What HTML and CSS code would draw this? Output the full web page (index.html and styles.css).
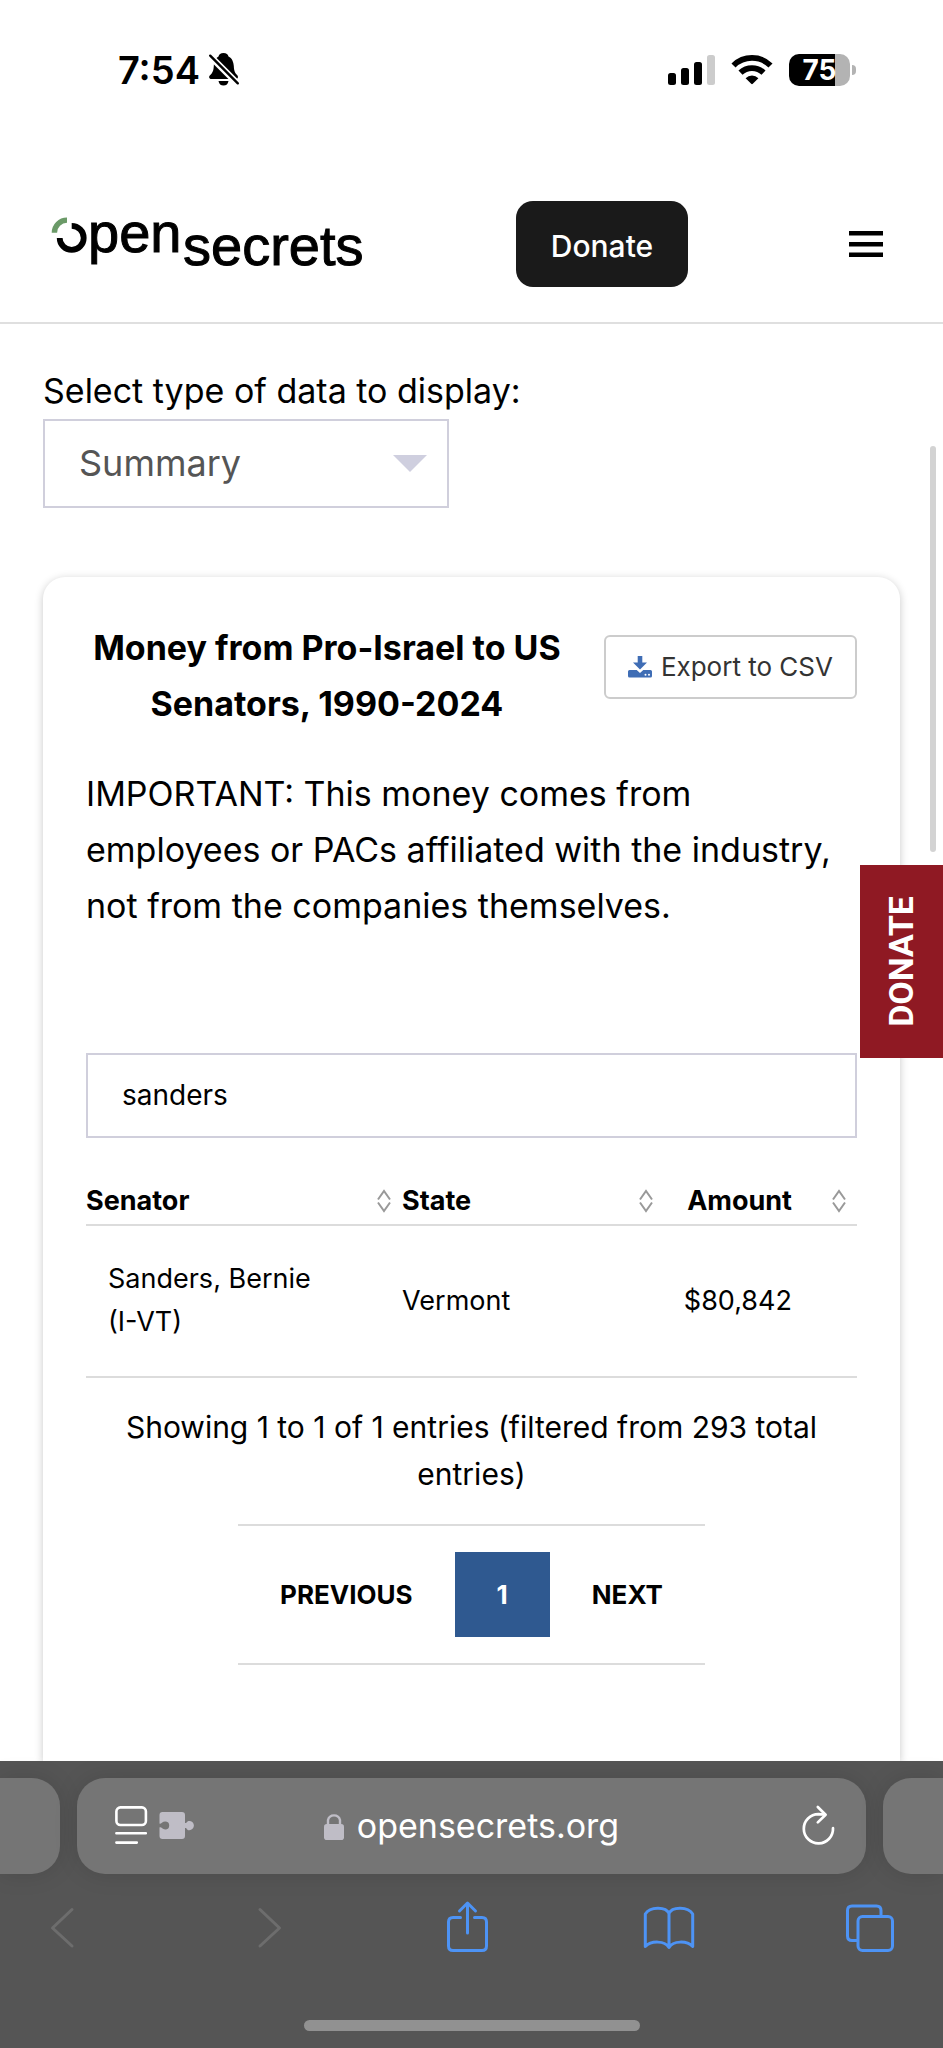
FILE: index.html
```html
<!DOCTYPE html>
<html lang="en">
<head>
<meta charset="utf-8">
<meta name="viewport" content="width=device-width, initial-scale=1">
<title>Money from Pro-Israel to US Senators - OpenSecrets</title>
<link rel="stylesheet" href="styles.css">
</head>
<body>
<div class="status-bar">
  <div class="status-left">
    <span class="clock">7:54</span>
    <svg class="bell" viewBox="0 0 30 34" width="30" height="34" aria-hidden="true">
      <path d="M14.500 0C17.500 0 19 1.500 19.500 3.500C23 5 24.500 9 24.800 13C25 18 26 20 28.500 22.500C29.600 24 28.800 26 27 26H2.500C.3 26 -.6 24 .8 22.500C4 19.500 4.500 17.500 4.800 13C5 9 6.500 5 9.500 3.500C10 1.500 11.500 0 14.500 0Z"/>
      <path d="M9.500 28H19.500C19 31 17.300 32.500 14.500 32.500S10 31 9.500 28Z"/>
      <path d="M-1 1L30 32" stroke="#fff" stroke-width="6.500"/>
      <path d="M1.200 2.700L28.800 30.300" stroke="#000" stroke-width="2.400" stroke-linecap="round"/>
    </svg>
  </div>
  <div class="status-right">
    <svg viewBox="0 0 47 30" width="47" height="30" aria-label="Signal">
      <rect x="0" y="18" width="8" height="12" rx="2.500"/>
      <rect x="13" y="13" width="8" height="17" rx="2.500"/>
      <rect x="26" y="7" width="8" height="23" rx="2.500"/>
      <rect x="39" y="0" width="8" height="30" rx="2.500" fill="#ccc"/>
    </svg>
    <svg viewBox="0 0 42 30" width="42" height="30" aria-label="Wi-Fi">
      <g fill="none" stroke="#000" stroke-width="5.800">
        <path d="M2.500 10.500A26.500 26.500 0 0 1 39.500 10.500"/>
        <path d="M9.500 17.700A16.500 16.500 0 0 1 32.500 17.700"/>
      </g>
      <path d="M14.600 23.200A9.200 9.200 0 0 1 27.400 23.200L21.800 28.800Q21 29.600 20.200 28.800Z"/>
    </svg>
    <div class="battery"><span class="battery-body">75</span><span class="battery-tip"></span></div>
  </div>
</div>

<header class="site-header">
  <a class="logo" href="#" aria-label="OpenSecrets">
    <svg viewBox="0 0 320 60" width="320" height="60">
      <path d="M6.400 18.700A12.600 12.600 0 0 1 19 6.100" fill="none" stroke="#6b9a68" stroke-width="5.400"/>
      <path d="M23.700 11.900A12 12 0 1 1 11.700 23.900" fill="none" stroke="#000" stroke-width="5.800"/>
      <text class="logo-text" x="40" y="38">pen</text>
      <text class="logo-text" x="135" y="51">secrets</text>
    </svg>
  </a>
  <a class="donate" href="#">Donate</a>
  <button class="menu" type="button" aria-label="Menu">
    <svg viewBox="0 0 34 26" width="34" height="26"><path d="M0 0H34V4.600H0ZM0 11H34V15.400H0ZM0 21.600H34V26H0Z"/></svg>
  </button>
</header>

<main class="page">
  <label class="type-label" for="data-type">Select type of data to display:</label>
  <div class="select-wrap">
    <select class="type-select" id="data-type"><option>Summary</option></select>
  </div>

  <section class="card">
    <div class="card-head">
      <h2 class="card-title">Money from Pro-Israel to US Senators, 1990-2024</h2>
      <button class="export" type="button">
        <svg viewBox="0 0 24 22" width="24" height="22" aria-hidden="true">
          <path fill="#3f6db5" d="M9.700 0H14.300V6.500H19L12 13.500L5 6.500H9.700ZM1.500 14H8.700L12 17L15.300 14H22.500Q24 14 24 15.500V20Q24 21.500 22.500 21.500H1.500Q0 21.500 0 20V15.500Q0 14 1.500 14Z"/>
          <circle cx="17.500" cy="18.800" r="1" fill="#fff"/><circle cx="21" cy="18.800" r="1" fill="#fff"/>
        </svg>
        Export to CSV
      </button>
    </div>
    <p class="notice">IMPORTANT: This money comes from employees or PACs affiliated with the industry, not from the companies themselves.</p>
    <input class="search" type="text" value="sanders" aria-label="Search senators">
    <table class="results">
      <colgroup><col class="col-senator"><col class="col-state"><col class="col-amount"></colgroup>
      <thead>
        <tr>
          <th scope="col"><button class="sort" type="button">Senator<svg viewBox="0 0 14 24" width="14" height="24"><path d="M1 10.500L7 2L13 10.500M1 13.500L7 22L13 13.500"/></svg></button></th>
          <th scope="col"><button class="sort" type="button">State<svg viewBox="0 0 14 24" width="14" height="24"><path d="M1 10.500L7 2L13 10.500M1 13.500L7 22L13 13.500"/></svg></button></th>
          <th scope="col"><button class="sort sort-end" type="button">Amount<svg viewBox="0 0 14 24" width="14" height="24"><path d="M1 10.500L7 2L13 10.500M1 13.500L7 22L13 13.500"/></svg></button></th>
        </tr>
      </thead>
      <tbody>
        <tr><td class="senator">Sanders, Bernie (I-VT)</td><td>Vermont</td><td class="amount">$80,842</td></tr>
      </tbody>
    </table>
    <p class="summary">Showing 1 to 1 of 1 entries (filtered from 293 total entries)</p>
    <nav class="pager" aria-label="Pages">
      <button class="page-btn" type="button">PREVIOUS</button>
      <button class="page-btn current" type="button" aria-current="page">1</button>
      <button class="page-btn" type="button">NEXT</button>
    </nav>
  </section>

  <div class="scroll-thumb"></div>
  <a class="donate-tab" href="#">DONATE</a>
</main>

<footer class="browser">
  <div class="tabs">
    <div class="tab tab-prev"></div>
    <div class="tab tab-current">
      <button class="page-menu" type="button" aria-label="Page menu">
        <svg viewBox="0 0 80 42" width="80" height="42">
          <g fill="none" stroke="#fff" stroke-width="2.600" stroke-linecap="round">
            <rect x="1.400" y="2.400" width="29.500" height="17.600" rx="4"/>
            <path d="M1.400 28.300H30.800M1.400 37.600H21.800"/>
          </g>
          <path fill="#bfbdc6" d="M47.500 7H67Q70 7 70 10V18C72 18.500 71.500 16 74.300 16A4.300 4.300 0 0 1 74.300 25.200C71.500 25.200 72 22.500 70 23V31Q70 34 67 34H47.500Q44.500 34 44.500 31V22.500C46.500 21.500 47 24.500 50.200 24.500A4 4 0 0 0 50.200 16.500C47 16.500 46.500 19.500 44.500 18.500V10Q44.500 7 47.500 7Z"/>
        </svg>
      </button>
      <a class="address" href="#">
        <svg viewBox="0 0 20 28" width="20" height="28" aria-hidden="true">
          <path d="M4 13V8A6.200 6.200 0 0 1 16 8V13" fill="none" stroke="#bfbdc6" stroke-width="2.400"/>
          <rect x="0" y="12" width="20" height="16" rx="2.800" fill="#bfbdc6"/>
        </svg>
        opensecrets.org
      </a>
      <button class="reload" type="button" aria-label="Reload">
        <svg viewBox="0 0 34 42" width="34" height="42"><g fill="none" stroke="#fff" stroke-width="2.700" stroke-linecap="round" stroke-linejoin="round"><path d="M31 23.200A14.600 14.600 0 1 1 16.400 9.200L23 9.500"/><path d="M15.800 2L23.600 9.700L15.800 17.400"/></g></svg>
      </button>
    </div>
    <div class="tab tab-next"></div>
  </div>
  <div class="toolbar">
    <button class="tool" type="button" aria-label="Back" disabled><svg viewBox="0 0 60 60" width="60" height="60"><path stroke="#6d6d6d" d="M40 12.500L20.500 31L40 49"/></svg></button>
    <button class="tool" type="button" aria-label="Forward" disabled><svg viewBox="0 0 60 60" width="60" height="60"><path stroke="#6d6d6d" d="M26 12.500L45.500 31L26 49"/></svg></button>
    <button class="tool" type="button" aria-label="Share"><svg viewBox="0 0 60 60" width="60" height="60"><path d="M24.500 20.500H17Q12.500 20.500 12.500 25V49Q12.500 53.500 17 53.500H46Q50.500 53.500 50.500 49V25Q50.500 20.500 46 20.500H38.500M31.500 36V6.500M23.500 14L31.500 6L39.500 14"/></svg></button>
    <button class="tool" type="button" aria-label="Bookmarks"><svg viewBox="0 0 60 60" width="60" height="60"><path d="M31 16.500C28 9.500 12 9.500 7.300 17V49.500C13 43.500 27 43.500 31 50.500C35 43.500 49 43.500 54.700 49.500V17C50 9.500 34 9.500 31 16.500ZM31 16.500V50"/></svg></button>
    <button class="tool" type="button" aria-label="Tabs"><svg viewBox="0 0 60 60" width="60" height="60"><rect x="18" y="19.500" width="34.500" height="34" rx="4.500"/><path d="M17 43.500H12Q7.500 43.500 7.500 39V13.500Q7.500 9 12 9H36.500Q41 9 41 13.500V18.500"/></svg></button>
  </div>
  <div class="home-indicator"></div>
</footer>
</body>
</html>
```
FILE: styles.css
```css
* { box-sizing: border-box; }

body {
  margin: 0;
  min-height: 100vh;
  display: flex;
  flex-direction: column;
  background: #fff;
  color: #000;
  font-family: Inter, "Liberation Sans", sans-serif;
}

button, input, select { font: inherit; color: inherit; }
button { border: 0; padding: 0; background: none; }
a { color: inherit; text-decoration: none; }
svg { display: block; flex: none; overflow: visible; }

/* Phone status bar */
.status-bar {
  display: flex;
  justify-content: space-between;
  align-items: center;
  padding: 48px 87px 74px 118px;
}
.status-left { display: flex; align-items: center; gap: 9px; }
.clock { font-size: 38px; line-height: 44px; font-weight: 600; }
.status-right { display: flex; align-items: center; gap: 16px; }
.battery { display: flex; align-items: center; gap: 2px; }
.battery-body {
  width: 61px;
  border-radius: 10px;
  background: linear-gradient(90deg, #000 46px, #b3b3b3 46px);
  color: #fff;
  font-size: 28px;
  line-height: 32px;
  font-weight: 700;
  text-align: center;
}
.battery-tip { width: 4px; height: 10px; border-radius: 0 4px 4px 0; background: #b3b3b3; }

/* Site header */
.site-header {
  display: flex;
  justify-content: space-between;
  align-items: center;
  padding: 35px 47px 35px 48px;
  border-bottom: 2px solid #dfdfdf;
}
.logo-text {
  font-family: "Liberation Sans", Arial, sans-serif;
  font-size: 56px;
  stroke: #000;
  stroke-width: 1px;
}
.donate {
  padding: 23px 35px 19px;
  border-radius: 17px;
  background: #1a1a1a;
  color: #fff;
  font-size: 30px;
  line-height: 44px;
  font-weight: 500;
}
.menu { width: 60px; height: 60px; display: flex; align-items: center; justify-content: center; }

/* Page body */
.page {
  position: relative;
  flex: 1;
  display: flex;
  flex-direction: column;
  padding: 39px 43px 0;
  overflow: hidden;
}
.type-label { font-size: 34px; line-height: 56px; }
.select-wrap { position: relative; align-self: flex-start; width: 406px; max-width: 100%; }
.select-wrap::after {
  content: "";
  position: absolute;
  right: 22px;
  top: 36px;
  border: 17px solid transparent;
  border-top-color: #cfcfdf;
  border-bottom: 0;
  pointer-events: none;
}
.type-select {
  appearance: none;
  display: block;
  width: 100%;
  height: 89px;
  padding: 0 34px 2px;
  border: 2px solid #d0cfdc;
  border-radius: 0;
  background: #fff;
  color: #555;
  font-size: 36px;
}

.card {
  flex: 1;
  margin-top: 69px;
  padding: 43px 43px 96px;
  border-radius: 22px 22px 0 0;
  background: #fff;
  box-shadow: 0 2px 9px rgba(0, 0, 0, .22);
}
.card-head { display: flex; align-items: flex-start; gap: 36px; }
.card-title {
  flex: 1;
  margin: 0;
  font-size: 34px;
  line-height: 56px;
  font-weight: 700;
  text-align: center;
}
.export {
  display: flex;
  align-items: center;
  gap: 9px;
  margin-top: 15px;
  padding: 9px 22px;
  border: 2px solid #ccc;
  border-radius: 6px;
  color: #333;
  font-size: 26px;
  line-height: 42px;
}
.notice { margin: 34px 0 119px; font-size: 34px; line-height: 56px; }
.search {
  display: block;
  width: 100%;
  height: 85px;
  padding: 0 34px 2px;
  border: 2px solid #d0cfdc;
  border-radius: 0;
  background: #fff;
  font-size: 28px;
}

.results {
  width: 100%;
  margin-top: 42px;
  border-collapse: collapse;
  table-layout: fixed;
  font-size: 27px;
  line-height: 43px;
}
.col-senator { width: 41%; }
.col-state { width: 34%; }
.col-amount { width: 25%; }
.results th { padding: 0 0 2px; border-bottom: 2px solid #dcdcdc; }
.results td { padding: 31px 0 33px; border-bottom: 2px solid #dcdcdc; }
.sort {
  display: flex;
  align-items: center;
  justify-content: space-between;
  width: 100%;
  padding-right: 11px;
  font-weight: 700;
  line-height: 42px;
}
.sort-end { justify-content: flex-end; gap: 40px; }
.sort svg { fill: none; stroke: #999; stroke-width: 2; }
.results .senator { padding-left: 22px; padding-right: 60px; }
.results .amount { padding-right: 65px; text-align: right; }

.summary { margin: 26px 0; font-size: 30px; line-height: 47px; text-align: center; }
.pager {
  display: flex;
  width: fit-content;
  margin: 0 auto;
  padding: 26px 0;
  border-top: 2px solid #dcdcdc;
  border-bottom: 2px solid #dcdcdc;
}
.page-btn { padding: 0 42px; font-size: 26px; line-height: 85px; font-weight: 700; }
.current { background: #2f5990; color: #fff; }

.scroll-thumb {
  position: absolute;
  right: 7px;
  top: 122px;
  width: 6px;
  height: 406px;
  border-radius: 3px;
  background: #d3d3d3;
}
.donate-tab {
  position: absolute;
  right: 0;
  top: 541px;
  padding: 31px 20px;
  background: #8f1923;
  color: #fff;
  font-family: Roboto, sans-serif;
  font-size: 34px;
  line-height: 43px;
  font-weight: 700;
  writing-mode: sideways-lr;
}

/* Browser chrome */
.browser { background: #555; padding: 17px 0; }
.tabs { display: grid; grid-template-columns: 60px 1fr 60px; gap: 17px; }
.tab { min-height: 96px; background: #757575; box-shadow: 0 0 24px rgba(0, 0, 0, .12); }
.tab-prev { border-radius: 0 28px 28px 0; }
.tab-next { border-radius: 28px 0 0 28px; }
.tab-current {
  display: grid;
  grid-template-columns: 1fr auto 1fr;
  align-items: center;
  padding: 0 30px;
  border-radius: 28px;
}
.page-menu { justify-self: start; padding-left: 8px; }
.reload { justify-self: end; }
.address {
  display: flex;
  align-items: center;
  gap: 13px;
  color: #fff;
  font-size: 34px;
  line-height: 48px;
}
.toolbar { display: flex; justify-content: space-between; padding: 23px 43px 63px 32px; }
.tool { width: 60px; height: 60px; }
.tool svg {
  fill: none;
  stroke: #4d93f5;
  stroke-width: 3;
  stroke-linecap: round;
  stroke-linejoin: round;
}
.home-indicator { width: 336px; height: 11px; margin: 0 auto; border-radius: 6px; background: #919191; }
```
